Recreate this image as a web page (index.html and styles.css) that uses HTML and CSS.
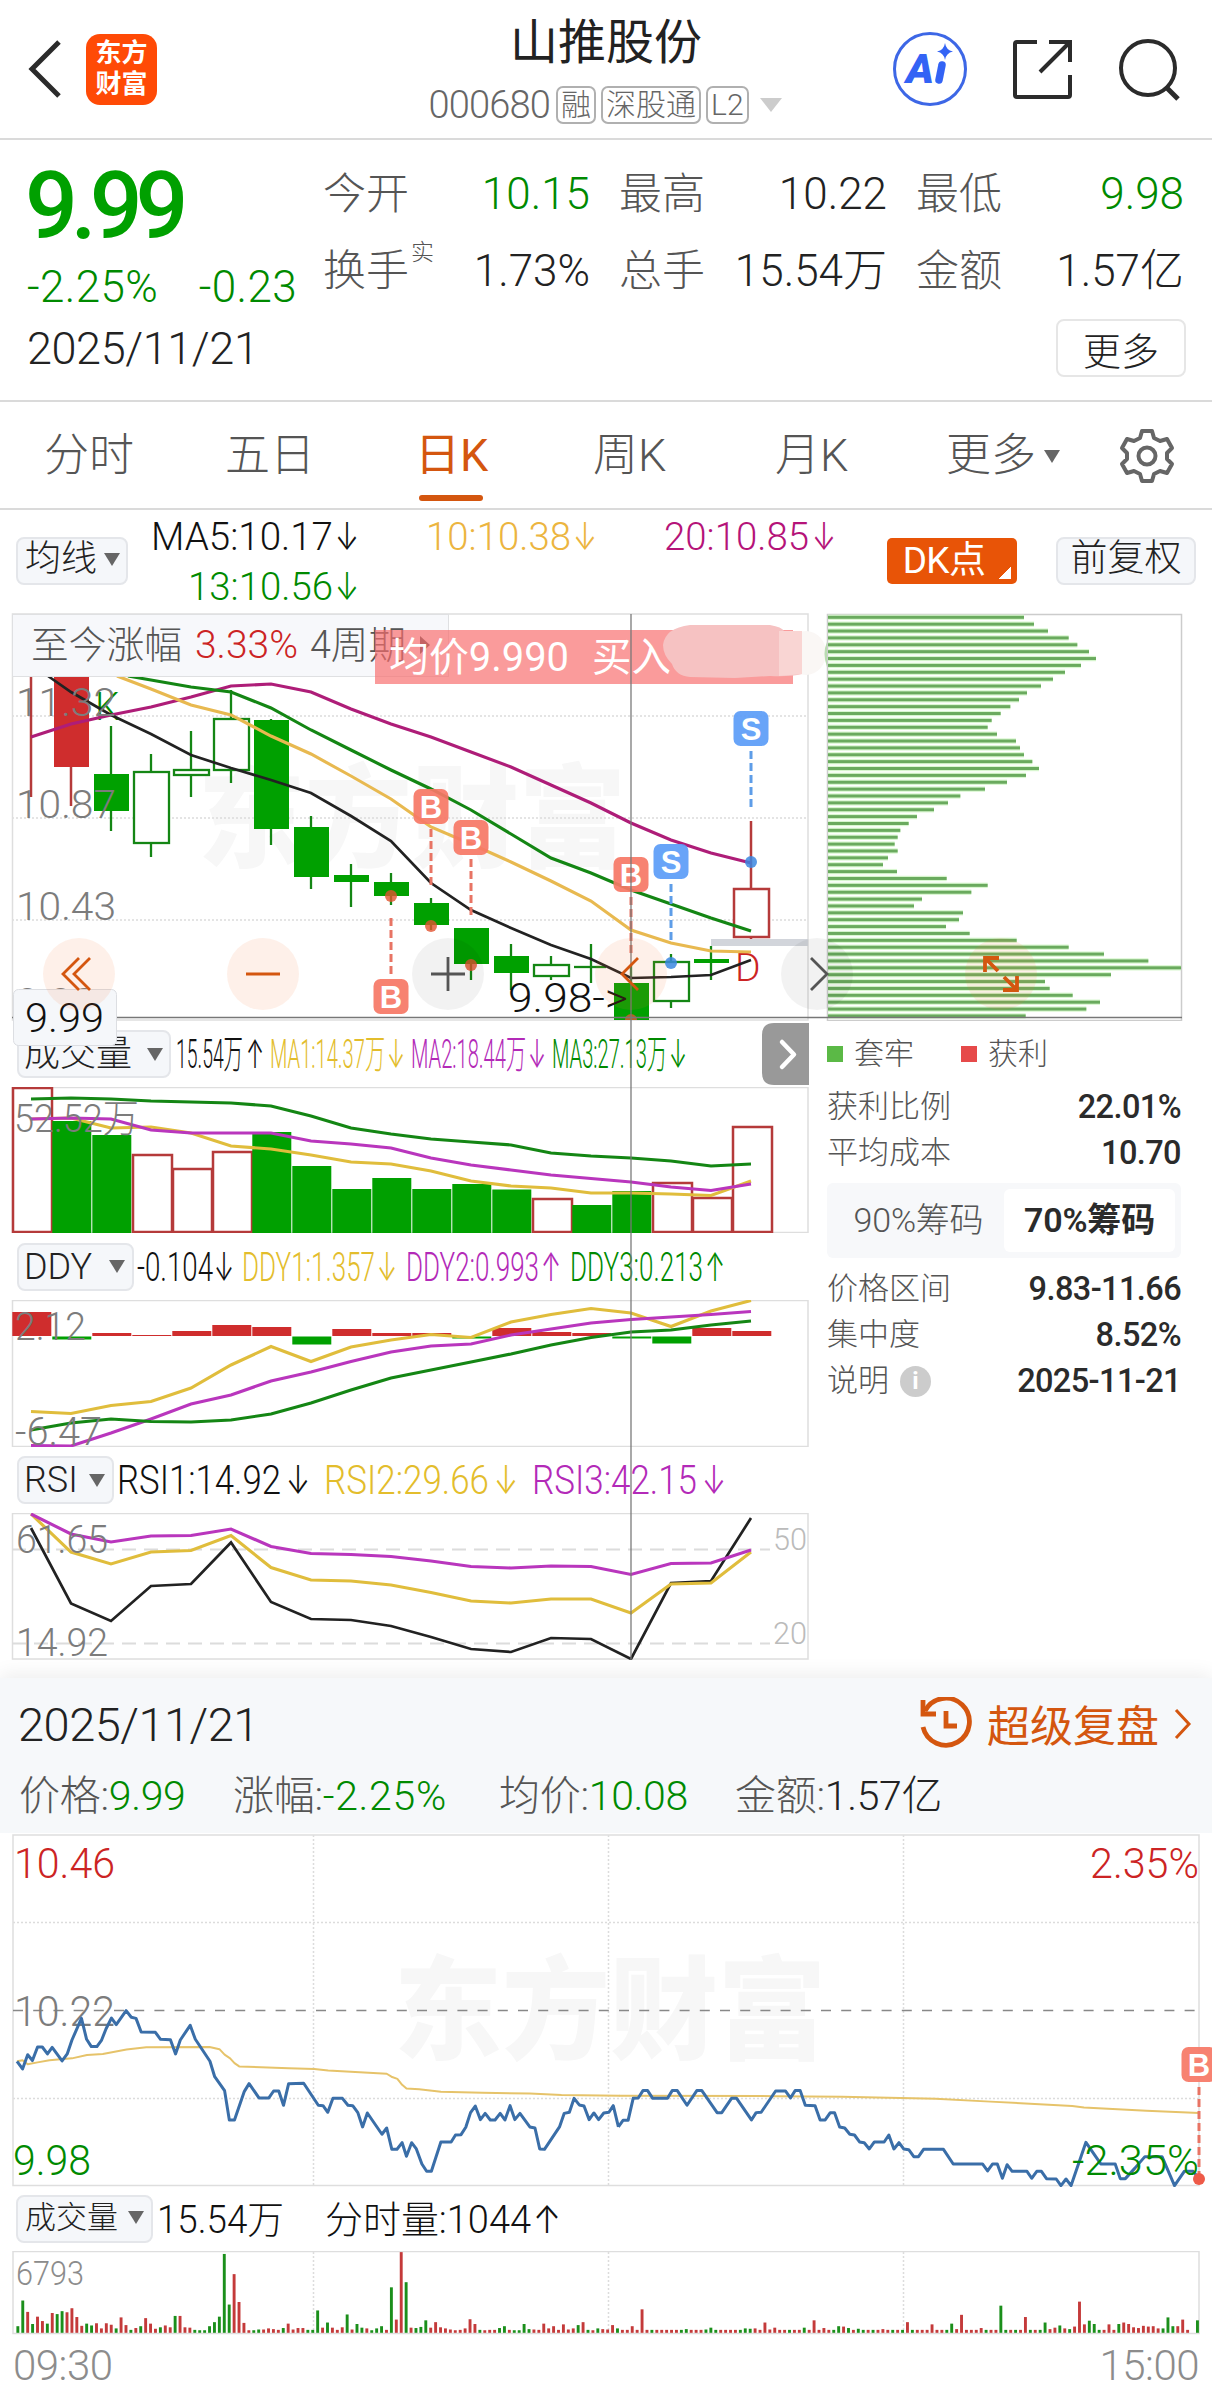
FILE: index.html
```html
<!DOCTYPE html>
<html lang="zh-CN">

<head>
    <meta charset="UTF-8">
    <meta name="viewport" content="width=device-width, initial-scale=1.0">
    <title>山推股份 000680</title>
    <link rel="stylesheet" href="styles.css">
</head>

<body>
    <header class="topbar">
        <div class="topbar-left">
            <svg class="back" width="36" height="64" viewBox="0 0 36 64">
                <path d="M32 5 L5 32 L32 59" />
            </svg>
            <div class="logo"><span>东方</span><span>财富</span></div>
        </div>
        <div class="topbar-title">
            <h1>山推股份</h1>
            <div class="code">
                <span class="code-num">000680</span>
                <span class="badge">融</span>
                <span class="badge">深股通</span>
                <span class="badge">L2</span>
                <i class="caret caret-light"></i>
            </div>
        </div>
        <div class="topbar-right">
            <svg width="76" height="76" viewBox="0 0 76 76">
                <circle cx="38" cy="38" r="35.5" fill="none" stroke="#3d67e6" stroke-width="3" />
                <text x="14" y="52" class="ai" textLength="28" lengthAdjust="spacingAndGlyphs">A</text>
                <path d="M50 34 L47 49" stroke="#3363f5" stroke-width="7.5" stroke-linecap="round" />
                <path d="M53 12 Q54 19 61 20.500 Q54 22 53 29 Q52 22 45 20.500 Q52 19 53 12Z" fill="#3363f5" />
            </svg>
            <svg width="64" height="64" viewBox="0 0 64 64" class="line-icon">
                <path d="M26 5 H6 Q4 5 4 7 V58 Q4 60 6 60 H57 Q59 60 59 58 V38" />
                <path d="M38 5 H59 V25 M58 6 L29 35" />
            </svg>
            <svg width="64" height="64" viewBox="0 0 64 64" class="line-icon">
                <circle cx="30" cy="31" r="27" />
                <path d="M49 51 L60 62" stroke-width="5" />
            </svg>
        </div>
    </header>

    <section class="quote">
        <div class="price-block">
            <div class="price">9.99</div>
            <div class="change"><span>-2.25%</span><span>-0.23</span></div>
        </div>
        <div class="stats">
            <div class="stat"><span>今开</span><b class="green">10.15</b></div>
            <div class="stat"><span>最高</span><b>10.22</b></div>
            <div class="stat"><span>最低</span><b class="green">9.98</b></div>
            <div class="stat"><span>换手<sup>实</sup></span><b>1.73%</b></div>
            <div class="stat"><span>总手</span><b>15.54万</b></div>
            <div class="stat"><span>金额</span><b>1.57亿</b></div>
        </div>
        <div class="quote-date">2025/11/21</div>
        <button class="more-btn">更多</button>
    </section>

    <nav class="tabs">
        <a>分时</a>
        <a>五日</a>
        <a class="active">日K</a>
        <a>周K</a>
        <a>月K</a>
        <a class="tab-more">更多<i class="caret"></i></a>
        <svg width="56" height="56" viewBox="0 0 56 56" class="gear">
            <path d="M23 3 H33 L35 10 L41 13 L48 11 L53 20 L48 25 V31 L53 36 L48 45 L41 43 L35 46 L33 53 H23 L21 46 L15 43 L8 45 L3 36 L8 31 V25 L3 20 L8 11 L15 13 L21 10 Z" />
            <circle cx="28" cy="28" r="8.5" />
        </svg>
    </nav>

    <section class="ma-row">
        <button class="pill ma-pill">均线<i class="caret"></i></button>
        <svg class="values" width="740" height="103" viewBox="140 510 740 103">
            <text x="151" y="550" textLength="182">MA5:10.17</text><text x="335" y="550" textLength="24">↓</text>
            <text x="188" y="600" textLength="145" class="green">13:10.56</text><text x="335" y="600" textLength="24" class="green">↓</text>
            <text x="426" y="550" textLength="145" class="gold">10:10.38</text><text x="573" y="550" textLength="24" class="gold">↓</text>
            <text x="664" y="550" textLength="145" class="plum">20:10.85</text><text x="812" y="550" textLength="24" class="plum">↓</text>
        </svg>
        <button class="dk">DK点</button>
        <button class="pill fq">前复权</button>
    </section>

    <section class="charts">
        <div class="left">
            <!-- daily candles -->
            <svg width="812" height="408" viewBox="0 613 812 408">
                <text x="198" y="859" class="watermark" textLength="428">东方财富</text>
                <path class="grid-dot" d="M12 716 H808 M12 818 H808 M12 920 H808" />
                <rect x="12.5" y="614" width="795.5" height="406" class="frame" />
                <rect x="711" y="939" width="97" height="7" fill="#d2d5db" />
                <text x="95" y="720" class="kd green">K</text>
                <text x="735" y="981" class="kd red">D</text>
                <g id="candles"></g>
                <g class="lines">
                    <polyline class="s-plum" points="31,737 71,724 111,715 151,707 191,697 231,686 271,684 311,692 351,709 391,724 431,737 471,752 511,767 551,785 591,803 631,823 671,840 711,853 751,863" />
                    <polyline class="s-green" points="128,676 191,687 231,692 271,708 311,730 351,750 391,770 431,789 471,810 511,834 551,858 591,873 631,890 671,904 711,918 751,931" />
                    <polyline class="s-gold" points="117,676 151,689 191,705 231,715 271,736 311,754 351,776 391,799 431,827 471,844 511,862 551,881 591,901 631,930 671,943 711,951 751,952" />
                    <polyline class="s-black" points="48,676 71,692 111,715 151,734 191,755 231,768 271,780 311,793 351,816 391,841 431,883 471,910 511,928 551,945 591,959 631,978 671,977 711,975 751,960" />
                </g>
                <g class="axis">
                    <text x="16" y="716" textLength="100">11.32</text>
                    <text x="16" y="818" textLength="100">10.87</text>
                    <text x="16" y="920" textLength="100">10.43</text>
                    <text x="16" y="1016" textLength="80">9.98</text>
                </g>
            </svg>

            <div class="ind-row">
                <button class="pill">成交量<i class="caret"></i></button>
                <svg class="values" width="637" height="66" viewBox="171 1021 637 66">
                    <text x="176" y="1068" textLength="67">15.54万</text><text x="246" y="1068" textLength="18">↑</text>
                    <text x="270" y="1068" textLength="115" class="yellow">MA1:14.37万</text><text x="387" y="1068" textLength="18" class="yellow">↓</text>
                    <text x="411" y="1068" textLength="115" class="violet">MA2:18.44万</text><text x="528" y="1068" textLength="18" class="violet">↓</text>
                    <text x="552" y="1068" textLength="115" class="green">MA3:27.13万</text><text x="669" y="1068" textLength="18" class="green">↓</text>
                </svg>
            </div>
            <svg width="812" height="146" viewBox="0 1087 812 146">
                <rect x="12.5" y="1087.5" width="795.5" height="145" class="frame" />
                <g id="volume"></g>
                <g class="lines">
                    <polyline class="s-yellow" points="31,1119 71,1118 87,1122 111,1128 151,1127 191,1133 231,1146 271,1149 311,1155 351,1162 391,1164 431,1171 471,1181 511,1186 551,1188 591,1193 631,1193 671,1194 711,1195.5 751,1181" />
                    <polyline class="s-violet" points="31,1119 71,1118 111,1119 151,1130 191,1133 231,1133 271,1133 311,1141 351,1144 391,1148 431,1158 471,1165 511,1170 551,1175 591,1178.5 631,1182 671,1187 711,1190.5 751,1184" />
                    <polyline class="s-green" points="31,1099 71,1098 111,1099 151,1101 191,1102 231,1103 271,1106 311,1116 351,1128 391,1134 431,1139 471,1142 511,1145 551,1153 591,1156 631,1158 671,1161 711,1166 751,1164" />
                </g>
                <g class="axis"><text x="14" y="1132" textLength="125">52.52万</text></g>
            </svg>

            <div class="ind-row">
                <button class="pill ddy-pill">DDY<i class="caret"></i></button>
                <svg class="values" width="674" height="67" viewBox="134 1233 674 67">
                    <text x="137" y="1281" textLength="76">-0.104</text><text x="214" y="1281" textLength="20">↓</text>
                    <text x="242" y="1281" textLength="133" class="yellow">DDY1:1.357</text><text x="377" y="1281" textLength="20" class="yellow">↓</text>
                    <text x="406" y="1281" textLength="133" class="violet">DDY2:0.993</text><text x="541" y="1281" textLength="20" class="violet">↑</text>
                    <text x="570" y="1281" textLength="133" class="green">DDY3:0.213</text><text x="705" y="1281" textLength="20" class="green">↑</text>
                </svg>
            </div>
            <svg width="812" height="147" viewBox="0 1300 812 147">
                <rect x="12.5" y="1300.5" width="795.5" height="146" class="frame" />
                <g id="ddy"></g>
                <g class="lines">
                    <polyline class="s-yellow" points="31,1411.5 71,1413.5 111,1405.5 151,1401.5 191,1388 231,1365 271,1346.5 311,1361.5 351,1347 391,1340 431,1334.5 471,1337.5 511,1322 551,1314.5 591,1308.5 631,1313 671,1326.5 711,1311 751,1300.5" />
                    <polyline class="s-violet" points="31,1445.5 71,1446 111,1433 151,1419 191,1404 231,1395 271,1381 311,1372 351,1361.5 391,1352 431,1346 471,1344 511,1335 551,1329 591,1323 631,1319.5 671,1317 711,1314.5 751,1311.5" />
                    <polyline class="s-green" points="31,1430 71,1423 111,1419 151,1421.5 191,1422 231,1420 271,1414 311,1403 351,1390 391,1378 431,1370 471,1362 511,1354 551,1345 591,1337.5 631,1332 671,1330 711,1325 751,1321" />
                </g>
                <g class="axis">
                    <text x="15" y="1340" textLength="71">2.12</text>
                    <text x="15" y="1445" textLength="87">-6.47</text>
                </g>
            </svg>

            <div class="ind-row">
                <button class="pill rsi-pill">RSI<i class="caret"></i></button>
                <svg class="values" width="694" height="66" viewBox="114 1447 694 66">
                    <text x="117" y="1494" textLength="164">RSI1:14.92</text><text x="286" y="1494" textLength="24">↓</text>
                    <text x="324" y="1494" textLength="165" class="yellow">RSI2:29.66</text><text x="494" y="1494" textLength="24" class="yellow">↓</text>
                    <text x="532" y="1494" textLength="165" class="violet">RSI3:42.15</text><text x="702" y="1494" textLength="24" class="violet">↓</text>
                </svg>
            </div>
            <svg width="812" height="147" viewBox="0 1513 812 147">
                <rect x="12.5" y="1513.5" width="795.5" height="145.5" class="frame" />
                <path d="M12 1549.5 H770 M12 1643.5 H770" stroke="#dcdcdc" stroke-width="2" stroke-dasharray="14 8" />
                <g class="axis-light">
                    <text x="773" y="1550" textLength="34">50</text>
                    <text x="773" y="1644" textLength="34">20</text>
                </g>
                <g class="lines">
                    <polyline class="s-black" points="31,1528 71,1603.5 111,1621 151,1586 191,1584 231,1542.5 271,1602 311,1619 351,1620 391,1626 431,1637 471,1649 511,1652 551,1638 591,1639 631,1659 671,1583 711,1581 751,1518" />
                    <polyline class="s-yellow" points="31,1514 71,1552 111,1564 151,1552 191,1550.5 231,1535.5 271,1567.5 311,1580 351,1581 391,1585 431,1592.5 471,1601 511,1603 551,1599 591,1599 631,1613 671,1584 711,1583 751,1552" />
                    <polyline class="s-violet" points="31,1514 71,1534 111,1542 151,1536 191,1535.5 231,1529 271,1546.5 311,1553.5 351,1554.5 391,1556.5 431,1561 471,1566.5 511,1568 551,1566 591,1566.5 631,1574.5 671,1563.5 711,1563 751,1550" />
                </g>
                <g class="axis">
                    <text x="16" y="1553" textLength="92">61.65</text>
                    <text x="16" y="1656" textLength="92">14.92</text>
                </g>
            </svg>
        </div>

        <aside class="chips">
            <svg width="358" height="408" viewBox="826 613 358 408">
                <rect x="827.5" y="614.5" width="354" height="406" fill="none" stroke="#ccc" stroke-width="1.5" />
                <g id="chipBars"></g>
            </svg>
            <div class="legend">
                <span><i class="sq sq-green"></i>套牢</span>
                <span><i class="sq sq-red"></i>获利</span>
            </div>
            <div class="chip-row"><span>获利比例</span><b>22.01%</b></div>
            <div class="chip-row"><span>平均成本</span><b>10.70</b></div>
            <div class="toggle">
                <span>90%筹码</span>
                <span class="on">70%筹码</span>
            </div>
            <div class="chip-row"><span>价格区间</span><b>9.83-11.66</b></div>
            <div class="chip-row"><span>集中度</span><b>8.52%</b></div>
            <div class="chip-row"><span>说明<i class="info">i</i></span><b>2025-11-21</b></div>
        </aside>

        <!-- crosshair, trade markers, tip and zoom controls float over the charts -->
        <svg class="overlay" width="1212" height="1065" viewBox="0 613 1212 1065">
            <rect x="12.5" y="614.5" width="436" height="62" fill="#f7f8fb" stroke="#dfe0e2" />
            <g class="tip-head">
                <text x="31" y="658" textLength="151">至今涨幅</text>
                <text x="195" y="658" textLength="103" class="red">3.33%</text>
                <text x="310" y="658" textLength="96">4周期</text>
            </g>
            <path d="M420 636 L430 645 L420 654Z" fill="#555" />
            <rect x="375" y="630" width="418" height="54" fill="#f76b6b" fill-opacity=".68" />
            <g class="tip-text">
                <text x="389" y="671" textLength="180">均价9.990</text>
                <text x="592" y="671" textLength="79">买入</text>
            </g>
            <ellipse cx="806" cy="653" rx="20" ry="22" fill="#faf7f5" />
            <path d="M690 625 H770 Q782 627 784 631 H802 V674 Q790 677 770 676 L735 678 L690 677 Q676 676 672 664 Q663 655 663 645 Q665 628 690 625Z" fill="#f6c2c2" />
            <path d="M779 631 H802 V674 L779 676Z" fill="#f9d5d3" />
            <path d="M827 642 Q822 653 827 667Z" fill="#b9dcb1" />

            <g class="dash">
                <path class="buy" d="M391 918 V976 M431 829 V886 M471 859 V916 M631 897 V954" />
                <path class="sell" d="M671 884 V941 M751 751 V808" />
            </g>
            <g fill="#e2532f" fill-opacity=".8">
                <circle cx="391" cy="896" r="6" />
                <circle cx="431" cy="926" r="6" />
                <circle cx="471" cy="965" r="6" />
                <path d="M625 1020 A6 6 0 0 1 637 1020Z" />
            </g>
            <g fill="#3b87e0" fill-opacity=".85">
                <circle cx="671" cy="963" r="6" />
                <circle cx="751" cy="862" r="6" />
            </g>
            <g id="marks"></g>

            <path d="M12 1017.5 H1182" stroke="#777" stroke-width="1.5" />
            <path d="M631 614 V1660" stroke="#777" stroke-opacity=".75" stroke-width="1.7" />
            <text x="508" y="1012" class="low" textLength="120">9.98-&gt;</text>

            <rect x="13.5" y="989.5" width="103" height="56" rx="5" fill="#f5f7fa" stroke="#dcdee2" />
            <text x="25" y="1032" class="pin" textLength="79">9.99</text>

            <g class="ctl-warm">
                <circle cx="79" cy="974" r="36" />
                <circle cx="263" cy="974" r="36" />
                <circle cx="631" cy="974" r="36" />
                <circle cx="1001" cy="974" r="36" />
                <path d="M79 958 L63 974 L79 990 M90 958 L74 974 L90 990" />
                <path d="M246 974 H280" />
                <path d="M638 958 L622 974 L638 990" />
                <path d="M999 958 H985 V972 M986 959 L998 971 M1003 990 H1017 V976 M1016 989 L1004 977" class="expand" />
            </g>
            <g class="ctl-gray">
                <circle cx="448" cy="974" r="36" />
                <circle cx="817" cy="974" r="36" />
                <path d="M431 974 H465 M448 957 V991" />
                <path d="M811 958 L827 974 L811 990" />
            </g>

            <path d="M809 1023 H774 Q762 1023 762 1035 V1073 Q762 1085 774 1085 H809Z" fill="#999" />
            <path d="M782 1042 L794 1054.5 L782 1067" fill="none" stroke="#fff" stroke-width="4.5" stroke-linecap="round" stroke-linejoin="round" />
        </svg>
    </section>

    <section class="detail">
        <div class="detail-head">
            <span class="detail-date">2025/11/21</span>
            <span class="replay">
                <svg width="54" height="54" viewBox="0 0 54 54">
                    <path d="M6 14 A23.5 23.5 0 1 1 4 30" />
                    <path d="M4 3 V17 H17" />
                    <path d="M27 14 V29 H38" />
                </svg>
                <span>超级复盘</span>
                <svg width="20" height="32" viewBox="0 0 20 32" class="chev">
                    <path d="M3 2 L16 16 L3 30" />
                </svg>
            </span>
        </div>
        <div class="detail-row">
            <span>价格:<b class="green">9.99</b></span>
            <span>涨幅:<b class="green minus">-2.25%</b></span>
            <span>均价:<b class="green">10.08</b></span>
            <span>金额:<b>1.57亿</b></span>
        </div>
    </section>

    <section class="minute">
        <svg width="1212" height="354" viewBox="0 1833 1212 354">
            <text x="394" y="2051" class="watermark" textLength="432">东方财富</text>
            <path class="grid-dot" d="M13 1922.5 H1199 M13 2098.5 H1199 M313.5 1835 V2185 M608.5 1835 V2185 M903.5 1835 V2185" />
            <rect x="13" y="1835" width="1186" height="350.5" class="frame" />
            <path d="M13 2010.5 H1199" stroke="#888" stroke-width="1.5" stroke-dasharray="10 10.2" />
            <g class="axis big">
                <text x="14" y="1878" textLength="101" class="red">10.46</text>
                <text x="14" y="2026" textLength="101">10.22</text>
                <text x="13" y="2174.5" textLength="78" class="green">9.98</text>
                <text x="1090" y="1878" textLength="109" class="red">2.35%</text>
            </g>
            <g class="minute-lines" transform="translate(0 1820) scale(.3954 .3667)">
                <polyline class="s-avg" points="43,658 57,655 70,666 95,661 125,655 182,650 220,641 260,638 320,626 370,620 530,619 555,625 568,640 582,650 593,663 605,672 730,677 795,679 830,683 978,692 990,700 1005,706 1017,722 1028,732 1060,734 1115,741 1220,744 1340,746 1420,750 1568,752" />
                <polyline class="s-blue" points="43,658 57,679 70,640 82,656 95,619 107,619 120,638 132,620 157,657 170,638 182,600 206,541 219,598 231,618 245,618 257,600 268,570 282,540 294,558 319,520 332,538 344,541 357,578 393,579 406,598 431,599 444,638 456,600 481,560 494,598 531,658 543,700 568,738 580,818 593,818 618,740 630,719 655,758 680,758 692,739 705,739 717,778 730,719 768,718 805,778 817,779 829,797 842,759 866,759 880,778 892,779 905,798 917,837 929,799 966,857 978,840 991,898 1004,898 1017,880 1028,917 1041,880 1053,897 1067,938 1079,958 1091,958 1115,878 1141,878 1152,859 1166,858 1178,838 1190,798 1202,780 1215,817 1227,800 1240,818 1252,818 1265,800 1277,818 1290,779 1302,817 1315,800 1340,837 1353,840 1365,897 1377,898 1415,837 1427,800 1440,797 1452,759 1465,777 1477,780 1490,817 1502,799 1514,817 1527,799 1540,797 1551,779 1564,837" />
            </g>
            <g class="minute-lines" transform="translate(600 1820) scale(.3903 .3667)">
                <polyline class="s-avg" points="50,752 450,753 620,755 860,760 1000,768 1210,780 1240,784 1400,793 1535,799" />
                <polyline class="s-blue" points="47,837 59,819 72,819 85,759 98,758 110,738 122,738 135,759 173,759 185,738 198,738 223,778 248,738 261,738 300,798 312,798 337,759 350,759 388,818 400,798 413,797 450,739 475,739 488,758 500,738 513,738 526,778 551,779 564,818 577,818 590,798 601,798 614,837 627,840 640,857 652,859 665,878 677,880 690,897 703,878 728,878 740,859 753,897 766,880 778,897 791,899 804,918 816,918 829,898 880,898 905,938 980,938 993,957 1006,938 1018,938 1031,977 1043,940 1056,958 1094,958 1106,977 1119,958 1131,958 1144,978 1169,979 1181,997 1194,979 1207,997 1245,879 1283,938 1320,938 1333,978 1346,978 1370,950 1396,918 1440,918 1472,997 1497,958 1520,958 1535,979" />
            </g>
            <g class="axis big"><text x="1072" y="2174.5" textLength="127" class="green">-2.35%</text></g>
            <g class="dash"><path class="buy" d="M1199 2087 V2176" /></g>
            <circle cx="1199" cy="2179" r="6" fill="#ee5a48" />
            <g id="minuteMark"></g>
        </svg>

        <div class="vol-row">
            <button class="pill">成交量<i class="caret"></i></button>
            <svg class="values" width="600" height="64" viewBox="153 2187 600 64">
                <text x="157" y="2233" textLength="127">15.54万</text>
                <text x="325" y="2233" textLength="206">分时量:1044</text><text x="533" y="2233" textLength="28">↑</text>
            </svg>
        </div>

        <svg width="1212" height="84" viewBox="0 2251 1212 84">
            <path class="grid-dot" d="M313.5 2252 V2333 M608.5 2252 V2333 M903.5 2252 V2333" />
            <rect x="13" y="2251.5" width="1186" height="82" class="frame" />
            <g class="axis small"><text x="16" y="2285" textLength="68">6793</text></g>
            <g id="minuteVol"></g>
        </svg>
        <div class="times"><span>09:30</span><span>15:00</span></div>
    </section>

    <script src="script.js"></script>
</body>

</html>
```

FILE: styles.css
```css
* {
    box-sizing: border-box;
}

body {
    margin: 0;
    width: 1212px;
    background: #fff;
    color: #222;
    font-family: Roboto, Inter, "Noto Sans CJK SC", sans-serif;
    font-weight: 300;
}

button {
    font-family: inherit;
    font-weight: inherit;
    color: #222;
    padding: 0;
}

svg {
    display: block;
    flex: none;
}

b {
    font-weight: inherit;
}

.green {
    color: #008a00;
    fill: #008a00;
}

.red {
    color: #cc2424;
    fill: #cc2424;
}

.gold {
    fill: #ecb53f;
}

.yellow {
    fill: #e3bd2c;
}

.violet {
    fill: #b32ab8;
}

.plum {
    fill: #b51379;
}

.caret {
    display: inline-block;
    border: 8px solid transparent;
    border-top: 13px solid #666;
    border-bottom: 0;
}

.caret-light {
    border-width: 14px 11px 0;
    border-top-color: #ccc;
    margin-left: 6px;
}

/* top bar */
.topbar {
    height: 140px;
    border-bottom: 2px solid #dadada;
    display: grid;
    grid-template-columns: 400px 410px 1fr;
}

.topbar-left {
    display: flex;
    align-items: center;
    padding-left: 27px;
}

.back path {
    fill: none;
    stroke: #2b2b2b;
    stroke-width: 5;
}

.logo {
    width: 71px;
    height: 71px;
    margin-left: 23px;
    border-radius: 14px;
    background: #ff4a06;
    color: #fff;
    font-size: 26px;
    font-weight: 700;
    line-height: 31px;
    display: flex;
    flex-direction: column;
    align-items: center;
    justify-content: center;
}

.topbar-title {
    display: flex;
    flex-direction: column;
    align-items: center;
}

.topbar-title h1 {
    margin: 11px 0 0;
    padding-left: 2px;
    font-size: 48px;
    line-height: 64px;
    font-weight: 400;
}

.code {
    display: flex;
    align-items: center;
    height: 40px;
    margin-top: 10px;
    color: #666;
    font-size: 38px;
}

.code-num {
    letter-spacing: -.8px;
    margin-right: 6px;
}

.badge {
    height: 38px;
    margin-right: 5px;
    padding: 0 3px;
    border: 2px solid #b0b0b0;
    border-radius: 7px;
    font-size: 30px;
    line-height: 34px;
}

.topbar-right {
    display: flex;
    align-items: center;
    padding: 0 0 0 82px;
    gap: 43px;
}

.ai {
    font: 900 italic 40px Roboto, sans-serif;
    fill: #3363f5;
}

.line-icon {
    fill: none;
    stroke: #2b2b2b;
    stroke-width: 4;
}

/* quote */
.quote {
    height: 262px;
    border-bottom: 2px solid #dadada;
    padding: 16px 26px 0 27px;
    display: grid;
    grid-template-columns: 296px 1fr;
    grid-template-rows: 162px 58px;
    row-gap: 1px;
}

.price {
    color: #00a000;
    font-size: 93px;
    font-weight: 500;
    line-height: 102px;
    letter-spacing: -7px;
    text-indent: -2px;
}

.change {
    display: flex;
    width: 270px;
    justify-content: space-between;
    color: #008a00;
    font-size: 44px;
    line-height: 58px;
    letter-spacing: .4px;
}

.stats {
    display: grid;
    grid-template-columns: 267px 268px 268px;
    grid-auto-rows: 77px;
    column-gap: 29px;
}

.stat {
    display: flex;
    justify-content: space-between;
    font-size: 44px;
    line-height: 77px;
}

.stat span {
    color: #555;
    font-size: 43px;
}

.stat sup {
    font-size: 23px;
    line-height: 0;
    position: relative;
    left: 2px;
    top: -11px;
}

.quote-date {
    font-size: 45px;
    line-height: 60px;
    letter-spacing: -.4px;
}

.more-btn {
    justify-self: end;
    width: 130px;
    height: 58px;
    padding-bottom: 5px;
    border: 2px solid #e6e6e6;
    border-radius: 8px;
    background: #fff;
    font-size: 38px;
}

/* tabs */
.tabs {
    height: 108px;
    border-bottom: 2px solid #dadada;
    padding-left: 44px;
    display: grid;
    grid-template-columns: 181px 190px 178px 182px 171px 173px 1fr;
    align-items: center;
    color: #555;
    font-size: 45px;
    line-height: 108px;
}

.tabs .active {
    color: #d4560f;
    font-weight: 400;
    position: relative;
}

.tabs .active::after {
    content: "";
    position: absolute;
    left: 4px;
    bottom: 9px;
    width: 64px;
    height: 6px;
    border-radius: 3px;
    background: #d4560f;
}

.tab-more .caret {
    margin: 0 0 8px 8px;
}

.gear {
    fill: none;
    stroke: #666;
    stroke-width: 4;
    stroke-linejoin: round;
}

/* moving averages */
.ma-row {
    height: 103px;
    display: flex;
    align-items: center;
}

.pill {
    display: flex;
    align-items: center;
    justify-content: space-between;
    height: 48px;
    border: 2px solid #e4e6ea;
    border-radius: 8px;
    background: #f5f7fa;
    font-size: 36px;
    line-height: 40px;
}

.ma-pill {
    width: 112px;
    margin: 0 12px 2px 16px;
    padding: 0 6px 3px 7px;
}

.values {
    font-size: 38px;
    fill: #111;
}

.dk {
    width: 130px;
    height: 46px;
    margin: 0 0 2px 7px;
    padding-right: 16px;
    border: 0;
    border-radius: 5px;
    color: #fff;
    font-size: 37px;
    font-weight: 400;
    line-height: 44px;
    letter-spacing: -.6px;
    background: linear-gradient(135deg, transparent 50%, #fff 50%) 112px 29px / 12px 12px no-repeat #e85407;
}

.fq {
    width: 140px;
    margin: 0 0 2px 39px;
    padding-bottom: 3px;
    justify-content: center;
    font-size: 37px;
}

/* charts */
.charts {
    position: relative;
    height: 1065px;
    display: grid;
    grid-template-columns: 826px 358px;
}

.overlay {
    position: absolute;
    left: 0;
    top: 0;
}

.frame {
    fill: none;
    stroke: #dedede;
    stroke-width: 1.5;
}

.grid-dot {
    fill: none;
    stroke: #dcdcdc;
    stroke-width: 1.5;
    stroke-dasharray: 2 2;
}

.watermark {
    font-size: 112px;
    font-weight: 900;
    fill: #f7f7f7;
}

.lines {
    fill: none;
    stroke-width: 3.1;
}

.s-black {
    stroke: #222;
    stroke-width: 2.7;
}

.s-gold {
    stroke: #e8b950;
}

.s-yellow {
    stroke: #e0bd3c;
}

.s-violet {
    stroke: #b936bd;
}

.s-plum {
    stroke: #ae1d78;
}

.s-green {
    stroke: #148614;
}

.up-line {
    fill: #fff;
    stroke: #b53a3a;
    stroke-width: 2.5;
}

.up-fill {
    fill: #cf2d2d;
}

.down-line {
    fill: #fff;
    stroke: #148614;
    stroke-width: 2.3;
}

.down-fill {
    fill: #00a000;
}

.axis {
    font-size: 39px;
    fill: #7c7c7c;
}

.axis-light {
    font-size: 32px;
    fill: #bbb;
}

.big {
    font-size: 42px;
}

.small {
    font-size: 33px;
    fill: #8c8c8c;
}

.kd {
    font-size: 39px;
}

.ind-row {
    display: flex;
    align-items: center;
    height: 67px;
    padding-left: 17px;
}

.left .ind-row:first-of-type,
.left .ind-row:last-of-type {
    height: 66px;
}

.ind-row .pill {
    width: 154px;
    padding: 0 6px 0 5px;
}

.ind-row .ddy-pill {
    width: 117px;
    padding: 0 7px 0 5px;
}

.ind-row .rsi-pill {
    width: 97px;
    padding: 0 7px 0 5px;
}

.ind-row .values {
    font-size: 40px;
}

.tip-head {
    font-size: 38px;
    fill: #555;
}

.tip-text {
    font-size: 40px;
    fill: #fff;
    font-weight: 400;
}

.low,
.pin {
    font-size: 40px;
    fill: #111;
}

.dash path {
    fill: none;
    stroke-width: 3;
    stroke-dasharray: 8 4;
}

.buy {
    stroke: #e87464;
}

.sell {
    stroke: #5e9de8;
}

.mark-text {
    font: 700 31px "Liberation Sans", sans-serif;
    fill: #fff;
    text-anchor: middle;
}

.ctl-warm circle {
    fill: #f97a35;
    fill-opacity: .11;
}

.ctl-warm path {
    fill: none;
    stroke: #d4560f;
    stroke-width: 2.8;
}

.ctl-warm .expand {
    stroke-width: 3.8;
}

.ctl-gray circle {
    fill: #000;
    fill-opacity: .05;
}

.ctl-gray path {
    fill: none;
    stroke: #555;
    stroke-width: 2.8;
}

/* chip distribution */
.legend {
    display: flex;
    gap: 47px;
    height: 62px;
    padding: 4px 0 0 1px;
    color: #555;
    font-size: 30px;
    line-height: 60px;
}

.legend span {
    display: flex;
    align-items: center;
}

.sq {
    width: 16px;
    height: 16px;
    margin-right: 11px;
}

.sq-green {
    background: #5bb946;
}

.sq-red {
    background: #e64a4a;
}

.chip-row {
    display: flex;
    justify-content: space-between;
    height: 46px;
    padding: 2px 3px 0 1px;
    color: #555;
    font-size: 31px;
    line-height: 44px;
}

.chip-row b {
    color: #2b2b2b;
    font-weight: 500;
    font-size: 32.5px;
    letter-spacing: -.6px;
}

.chip-row span {
    display: flex;
    align-items: center;
}

.info {
    width: 31px;
    height: 31px;
    margin-left: 11px;
    border-radius: 50%;
    background: #ccc;
    color: #fff;
    font: 700 24px/31px Roboto, sans-serif;
    text-align: center;
}

.toggle {
    display: flex;
    align-items: center;
    width: 354px;
    height: 75px;
    margin: 8px 0 7px 1px;
    padding: 6px;
    border-radius: 6px;
    background: #f7f8fa;
    color: #555;
    font-size: 34px;
    letter-spacing: -.2px;
}

.toggle span {
    flex: 1;
    height: 63px;
    line-height: 63px;
    border-radius: 6px;
    text-align: center;
}

.toggle .on {
    background: #fff;
    color: #2b2b2b;
    font-weight: 600;
}

/* selected day */
.detail {
    position: relative;
    height: 155px;
    background: #f6f8fa;
    box-shadow: 0 -4px 18px rgba(0, 0, 0, .07);
    clip-path: inset(-24px 0 0 0);
}

.detail-head {
    display: flex;
    justify-content: space-between;
    align-items: center;
    height: 94px;
    padding: 0 19px 2px 18px;
}

.detail-date {
    font-size: 47px;
    letter-spacing: -.5px;
}

.replay {
    display: flex;
    align-items: center;
    gap: 14px;
    color: #d4560f;
    font-size: 43px;
    font-weight: 400;
}

.replay span {
    padding-bottom: 2px;
}

.replay svg {
    fill: none;
    stroke: #d4560f;
    stroke-width: 4.8;
}

.replay .chev {
    stroke-width: 3;
}

.detail-row {
    display: grid;
    grid-template-columns: 214px 266px 236px 1fr;
    padding-left: 19px;
    color: #555;
    font-size: 41px;
    line-height: 48px;
    letter-spacing: -.3px;
}

.detail-row .minus {
    letter-spacing: .7px;
}

.detail-row b:not(.green) {
    color: #222;
}

/* minute chart */
.minute-lines polyline {
    fill: none;
    vector-effect: non-scaling-stroke;
    stroke-linejoin: round;
}

.s-blue {
    stroke: #3a6ea8;
    stroke-width: 3;
}

.s-avg {
    stroke: #e6c36a;
    stroke-width: 2;
}

.vol-row {
    display: flex;
    align-items: center;
    height: 64px;
    padding-left: 16px;
}

.vol-row .pill {
    width: 137px;
    padding: 0 7px 3px;
    font-size: 31px;
}

.times {
    display: flex;
    justify-content: space-between;
    padding: 0 13px 0 13px;
    color: #8c8c8c;
    font-size: 42px;
    line-height: 62px;
    letter-spacing: -.5px;
}
```

FILE: script.js
```js
// fit every text that has a target length by scaling the glyphs too
document.querySelectorAll('text[textLength]').forEach(function (t) {
    t.setAttribute('lengthAdjust', 'spacingAndGlyphs');
});

function rect(x, y, w, h, cls) {
    return '<rect x="' + x + '" y="' + y + '" width="' + w + '" height="' + h + '" class="' + cls + '"/>';
}

// [kind, body top, body bottom, wick top, wick bottom]
let candles = [
    ['wick', 676, 676, 676, 797], ['up', 676, 767, 676, 806], ['down', 774, 811, 726, 831],
    ['hollow', 772, 843, 754, 857], ['hollow', 770, 775, 731, 797], ['hollow', 719, 770, 690, 783],
    ['down', 720, 829, 719, 845], ['down', 827, 877, 816, 889], ['down', 875, 882, 864, 907],
    ['down', 882, 896, 873, 905], ['down', 903, 925, 898, 930], ['down', 928, 964, 928, 980],
    ['down', 956, 973, 944, 990], ['hollow', 965, 976, 956, 980], ['doji', 967, 967, 944, 983],
    ['down', 983, 1020, 965, 1020], ['hollow', 962, 1001, 954, 1008], ['down', 959, 963, 946, 980],
    ['rise', 889, 937, 821, 939]
];
let out = '';
candles.forEach(function (c, i) {
    let x = 31 + i * 40;
    let up = c[0] == 'up' || c[0] == 'wick' || c[0] == 'rise';
    out += '<path class="' + (up ? 'up-line' : 'down-line') + '" d="M' + x + ' ' + c[3] + 'V' + c[4] + '"/>';
    if (c[0] == 'up') out += rect(x - 17, c[1], 35, c[2] - c[1], 'up-fill');
    if (c[0] == 'down') out += rect(x - 17, c[1], 35, c[2] - c[1], 'down-fill');
    if (c[0] == 'hollow') out += rect(x - 17, c[1], 35, c[2] - c[1], 'down-line');
    if (c[0] == 'rise') out += rect(x - 17, c[1], 35, c[2] - c[1], 'up-line');
    if (c[0] == 'doji') out += '<path class="down-line" d="M' + (x - 17) + ' 967H' + (x + 15) + '"/>';
});
document.getElementById('candles').innerHTML = out;

// volume: positive = hollow red, negative = green
let volume = [1088, -1121, -1135, 1155, 1169, 1152, -1132, -1166, -1189, -1178, -1189, -1184, -1189.5,
    1199, -1205, -1191, 1183, 1198, 1127];
out = '';
volume.forEach(function (v, i) {
    let x = 12 + i * 40;
    if (v < 0) out += rect(x + .3, -v, 39, 1233 + v, 'down-fill');
    else out += rect(x + 1, v, 39, 1232 - v, 'up-line');
});
document.getElementById('volume').innerHTML = out;

let ddy = [24, -3, 3, 1, 5, 11, 9, -8, 7, 3, 3, -2, 8, 4, 3, -2, -7, 8, 5];
out = '';
ddy.forEach(function (v, i) {
    out += rect(12.3 + i * 40, v > 0 ? 1336 - v : 1336.5, 39, Math.abs(v), v > 0 ? 'up-fill' : 'down-fill');
});
document.getElementById('ddy').innerHTML = out;

// chip distribution, top price first
let chips = [672, 702, 744, 806, 832, 867, 888, 843, 795, 759, 723, 681, 657, 631, 602, 575, 563, 591, 648, 660,
    672, 697, 717, 678, 621, 555, 481, 444, 402, 351, 326, 301, 293, 284, 293, 264, 249, 291, 440, 563,
    514, 366, 342, 489, 477, 438, 509, 650, 806, 912, 1045, 1143, 933, 735, 749, 818, 900, 859, 677];
out = '';
chips.forEach(function (v, i) {
    let y = 615.8 + i * 6.873;
    let w = (v - 84) / 3;
    out += '<rect x="828" y="' + (y - 1.2) + '" width="' + w + '" height="5.4" fill="#d9f7d0"/>';
    out += '<rect x="828" y="' + y + '" width="' + w + '" height="3" fill="#6aaa5e"/>';
});
document.getElementById('chipBars').innerHTML = out;

// buy / sell markers
function mark(letter, x, y) {
    let fill = letter == 'B' ? '#f67866' : '#5c9df8';
    return '<rect x="' + (x - 17.5) + '" y="' + y + '" width="35" height="35" rx="7" fill="' + fill +
        '" fill-opacity=".93"/><text x="' + x + '" y="' + (y + 28.5) + '" class="mark-text">' + letter + '</text>';
}
document.getElementById('marks').innerHTML = mark('B', 391, 979) + mark('B', 431, 789) + mark('B', 471, 820) +
    mark('B', 631, 857) + mark('S', 671, 844) + mark('S', 751, 711);
document.getElementById('minuteMark').innerHTML = mark('B', 1199, 2047);

// per-minute volume: positive = red, negative = green
let minutes = [-18, -88, 57, -24, 44, 32, -25, 54, -51, -59, 56, 67, 43, 19, -25, -20, 26, 12, 26, 22,
    -12, 42, 21, -8, 13, -18, 40, 25, 11, -15, 20, 15, -46, 46, 15, 14, -8, -7, -7, -18,
    -29, -44, -215, -77, 160, 84, 27, 7, -7, -9, 9, 12, 10, 8, -13, 25, 9, 13, 13, -8,
    -8, -61, 14, -28, 14, 8, 15, -50, 9, -24, -14, 12, -7, -12, -18, 8, -124, 36, 220, -138,
    14, -13, -16, -34, 14, 29, 15, 12, 9, 7, 8, 12, 37, 24, -8, 7, 8, 8, -13, -18,
    8, -7, -7, -24, -10, 9, 8, 25, 12, 18, 8, 23, 9, 12, -21, 29, -8, 7, -12, 10,
    9, 21, -12, 8, 8, 18, 8, 64, 8, -8, 8, 8, 8, 8, 8, -8, -10, 8, 8, 8,
    -9, -14, -8, 8, 8, 8, 8, -8, -12, -11, 12, 8, 28, 9, 14, 8, 8, -8, 8, 8,
    -14, 8, 34, 8, 13, 8, -8, -18, 17, -13, 8, -11, -8, 8, -8, 8, 10, 8, -8, 8,
    -8, 29, -8, 8, 8, 8, 23, 8, 8, -8, -25, 10, 49, 8, 8, 8, 13, -8, 8, 8,
    -74, -8, 8, -8, 8, 43, -8, 8, -8, -28, 10, 14, -20, 12, -10, 17, 85, 23, -33, -24,
    -8, 8, 23, 8, -24, 28, 24, 15, 13, 19, 17, 18, 12, -12, -42, -18, 18, 36, 8, 0, -34];
out = '';
minutes.forEach(function (v, i) {
    let h = Math.abs(v) / 2.727;
    out += '<rect x="' + (16.4 + i * 4.915) + '" y="' + (2332.8 - h) + '" width="2.9" height="' + h +
        '" fill="' + (v > 0 ? '#c43a3a' : '#1b8f1b') + '"/>';
});
document.getElementById('minuteVol').innerHTML = out;
```
